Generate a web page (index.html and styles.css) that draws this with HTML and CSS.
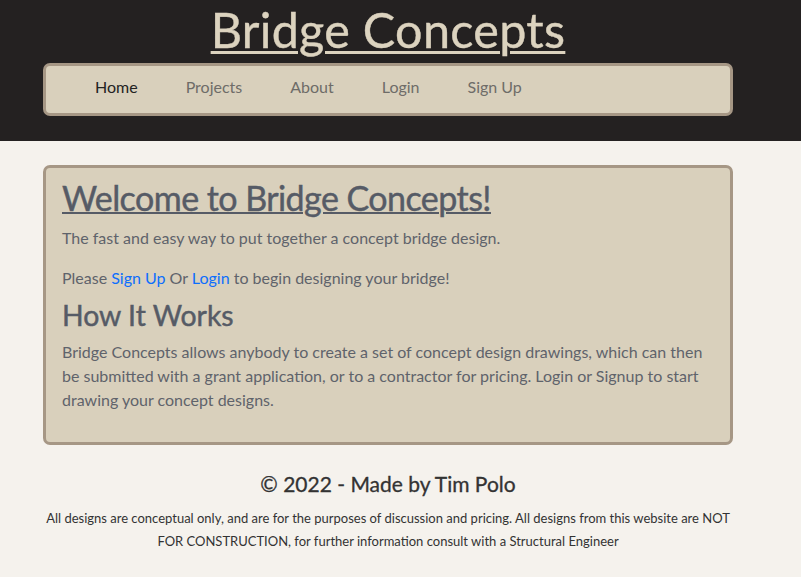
FILE: index.html
```html
<!DOCTYPE html>
<html lang="en">
<head>
<meta charset="utf-8">
<title>Bridge Concepts</title>
<link rel="stylesheet" href="styles.css">
</head>
<body>
<header class="site-header">
  <div class="container">
    <h1 class="brand"><a href="#">Bridge Concepts</a></h1>
    <nav class="navbar">
      <ul class="nav-list">
        <li><a class="nav-link active" href="#">Home</a></li>
        <li><a class="nav-link" href="#">Projects</a></li>
        <li><a class="nav-link" href="#">About</a></li>
        <li><a class="nav-link" href="#">Login</a></li>
        <li><a class="nav-link" href="#">Sign Up</a></li>
      </ul>
    </nav>
  </div>
</header>
<main class="container main">
  <section class="card">
    <h1 class="card-title"><a href="#">Welcome to Bridge Concepts!</a></h1>
    <p>The fast and easy way to put together a concept bridge design.</p>
    <p class="before-sub">Please <a class="link" href="#">Sign Up</a> Or <a class="link" href="#">Login</a> to begin designing your bridge!</p>
    <h2 class="card-sub">How It Works</h2>
    <p>Bridge Concepts allows anybody to create a set of concept design drawings, which can then be submitted with a grant application, or to a contractor for pricing. Login or Signup to start drawing your concept designs.</p>
  </section>
  <footer class="footer">
    <h4 class="footer-title">© 2022 - Made by Tim Polo</h4>
    <p class="footer-note">All designs are conceptual only, and are for the purposes of discussion and pricing. All designs from this website are NOT FOR CONSTRUCTION, for further information consult with a Structural Engineer</p>
  </footer>
</main>
</body>
</html>
```
FILE: styles.css
```css
* { box-sizing: border-box; }
html, body { margin: 0; padding: 0; }
body {
  font-family: Lato, "Open Sans", sans-serif;
  font-size: 16px;
  line-height: 1.5;
  background: #f5f2ed;
  color: #333;
}
.container {
  width: 690px;
  margin-left: 43px;
  margin-right: auto;
}
.site-header {
  background: #242121;
  height: 141px;
}
.brand {
  margin: 0;
  text-align: center;
  font-size: 48.5px;
  font-weight: 400;
  line-height: 59px;
  letter-spacing: 0.3px;
  -webkit-text-stroke: 0.4px #dcd3bf;
}
.brand a {
  color: #dcd3bf;
  text-decoration: underline;
  text-decoration-thickness: 3px;
  text-underline-offset: 3px;
}
.navbar {
  margin-top: 4px;
  height: 53px;
  background: #d9d0bc;
  border: 3px solid #a69785;
  border-radius: 7px;
  display: flex;
  align-items: center;
  padding-bottom: 6px;
}
.nav-list {
  list-style: none;
  margin: 0;
  padding: 0 0 0 25px;
  display: flex;
}
.nav-link {
  display: block;
  padding: 8px 24px;
  color: #6e6c68;
  text-decoration: none;
}
.nav-link.active { color: #232323; }
.main {
  padding-top: 24px;
}
.card {
  background: #d9d0bc;
  border: 3px solid #a69785;
  border-radius: 7px;
  padding: 10px 16px 14px;
  color: #5f636b;
}
.card p { margin: 0 0 16px; }
.card p.before-sub { margin-bottom: 8px; }
.card-title {
  margin: 0 0 7px;
  font-size: 34px;
  font-weight: 400;
  line-height: 1.2;
  letter-spacing: -0.55px;
  -webkit-text-stroke: 0.45px #565b66;
}
.card-title a { color: #565b66; text-decoration: underline; text-decoration-thickness: 2px; }
.card-sub {
  margin: 0 0 8px;
  font-size: 28.4px;
  font-weight: 400;
  line-height: 1.2;
  color: #565b66;
  -webkit-text-stroke: 0.45px #565b66;
}
.link { color: #0d6efd; text-decoration: none; }
.footer {
  text-align: center;
  padding-top: 26px;
}
.footer-title {
  margin: 0 0 11px;
  font-size: 21px;
  font-weight: 400;
  line-height: 1.2;
  color: #333;
  -webkit-text-stroke: 0.3px #333;
}
.footer-note {
  margin: 0;
  font-size: 13px;
  line-height: 23px;
  color: #333;
}
```
